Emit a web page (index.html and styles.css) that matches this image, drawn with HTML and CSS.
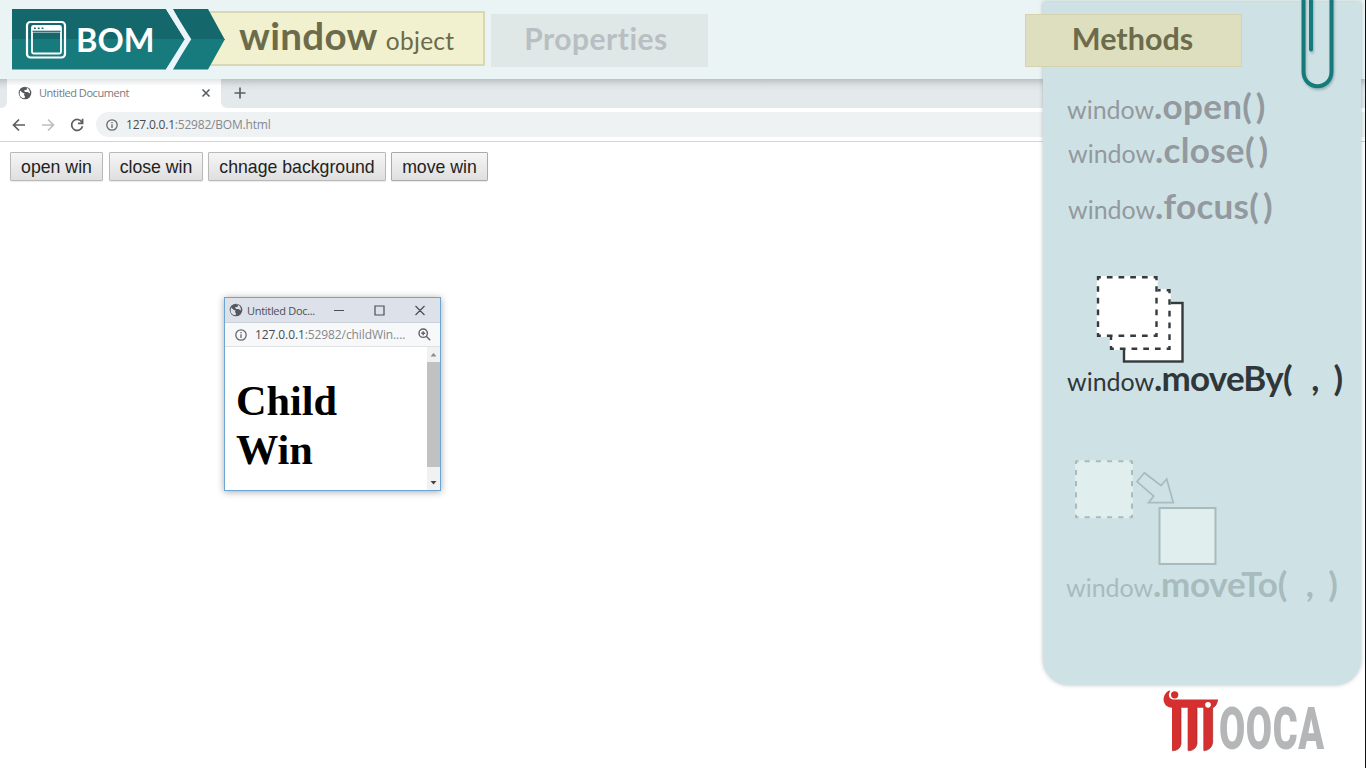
FILE: index.html
```html
<!DOCTYPE html>
<html lang="en">
<head>
<meta charset="utf-8">
<title>BOM - window object</title>
<link rel="stylesheet" href="styles.css">
</head>
<body>
<div class="stage">
  <header class="topbar">
    <div class="brand">
      <svg class="ribbon" viewBox="0 0 214 61">
        <path fill="#14676b" d="M0 0H154L173.300 31H0z"/><path fill="#177a7d" d="M0 30H173.300L154 60.500H0z"/>
        <path fill="#14676b" d="M161 0H196L213 31H178z"/><path fill="#177a7d" d="M178 30H213L196 60.500H161z"/>
        <path fill="none" stroke="#eaf4fb" stroke-width="5.500" d="M156.500 -1L176 30.300L156.500 61.500"/>
        <g fill="none" stroke="#fff"><rect x="15" y="13" width="38" height="35.500" rx="3.500" stroke-width="2.200"/><path fill="#fff" stroke="none" d="M20 17H49V23.500H20z"/><rect x="20" y="17" width="29" height="27.500" rx="1.500" stroke-width="1.800"/><path stroke="#14676b" stroke-width="1.600" stroke-dasharray="1.800 2" d="M22 19.300H33"/><path stroke="#14676b" stroke-width="1.200" d="M20.500 22.300H48.500"/></g>
      </svg>
      <span class="brand-name">BOM</span>
    </div>
    <div class="crumb"><b>window</b><span>object</span></div>
    <div class="tab-properties">Properties</div>
  </header>

  <div class="tabstrip">
    <div class="strip-edge"></div>
    <div class="tab">
      <svg class="globe" viewBox="0 0 14 14"><circle cx="7" cy="7" r="6.300" fill="#55585c"/><path fill="#fff" d="M2 4.500L5 7L6.500 7.500L6 9L7 10.500L6.500 12.300Q2 12 1.600 8zM6 1.900H9L8.500 4L6 4.300L7 6H9.500L12 7.500L11.700 5Q11 2.500 9 1.700z"/></svg>
      <span class="tab-title">Untitled Document</span>
      <svg class="tab-close" viewBox="0 0 10 10"><path d="M1.500 1.500L8.500 8.500M8.500 1.500L1.500 8.500"/></svg>
    </div>
    <div class="strip-rest"><svg class="plus" viewBox="0 0 12 12"><path d="M6 .5V11.500M.5 6H11.500"/></svg></div>
  </div>
  <div class="toolbar">
    <svg class="nav" viewBox="0 0 14 14"><path d="M13 7H2M7 1.500L1.500 7L7 12.500"/></svg>
    <svg class="nav nav-off" viewBox="0 0 14 14"><path d="M1 7H12M7 1.500L12.500 7L7 12.500"/></svg>
    <svg class="nav" viewBox="0 0 14 14"><path d="M12 4.300A5.500 5.500 0 1 0 12.500 8.300M8 5.300H12.600V.7"/></svg>
    <div class="address">
      <svg class="info" viewBox="0 0 12 12"><circle cx="6" cy="6" r="5.200"/><path d="M6 5.200V9M6 2.900V4.200"/></svg>
      <span class="url"><em>127.0.0.1</em>:52982/BOM.html</span>
    </div>
  </div>

  <main class="page">
    <button class="btn b1">open win</button>
    <button class="btn b2">close win</button>
    <button class="btn b3">chnage background</button>
    <button class="btn b4">move win</button>
  </main>

  <section class="child">
    <div class="child-title">
      <svg class="globe" viewBox="0 0 14 14"><circle cx="7" cy="7" r="6.300" fill="#55585c"/><path fill="#dde1ea" d="M2 4.500L5 7L6.500 7.500L6 9L7 10.500L6.500 12.300Q2 12 1.600 8zM6 1.900H9L8.500 4L6 4.300L7 6H9.500L12 7.500L11.700 5Q11 2.500 9 1.700z"/></svg>
      <span>Untitled Doc...</span>
      <svg class="controls" viewBox="0 0 94 12"><path d="M1 6.500H11M42 2H51V11H42zM82.500 2L91.500 11M91.500 2L82.500 11"/></svg>
    </div>
    <div class="child-url">
      <svg class="info" viewBox="0 0 12 12"><circle cx="6" cy="6" r="5.200"/><path d="M6 5.200V9M6 2.900V4.200"/></svg>
      <span class="url"><em>127.0.0.1</em>:52982/childWin....</span>
      <svg class="mag" viewBox="0 0 13 13"><circle cx="5.200" cy="5.200" r="4.200"/><path d="M8.300 8.300L12.200 12.200M3.200 5.200H7.200M5.200 3.200V7.200"/></svg>
    </div>
    <div class="child-body">
      <h1>Child<br>Win</h1>
      <div class="scroll">
        <svg viewBox="0 0 13 15"><path fill="#8c8c8c" d="M3.500 9.500H9.500L6.500 6z"/></svg>
        <div class="thumb"></div>
        <svg viewBox="0 0 13 15"><path fill="#444" d="M3.500 6H9.500L6.500 9.500z"/></svg>
      </div>
    </div>
  </section>

  <aside class="panel">
    <div class="tab-methods">Methods</div>
    <p class="method m-open"><span>window</span><b>.open<u>()</u></b></p>
    <p class="method m-close"><span>window</span><b>.close<u>()</u></b></p>
    <p class="method m-focus"><span>window</span><b>.focus<u>()</u></b></p>
    <svg class="pic-by" viewBox="1096 275 90 90">
      <g fill="#fff" stroke="#343a3d" stroke-width="2.400"><rect x="1124" y="303" width="58.500" height="58.500"/>
      <rect x="1111" y="290.300" width="58.500" height="58.500" stroke="#fff"/><rect x="1111" y="290.300" width="58.500" height="58.500" stroke-dasharray="5.700 6" stroke-dashoffset="2.850"/>
      <rect x="1098" y="277.300" width="58.500" height="58.500" stroke="#fff"/><rect x="1098" y="277.300" width="58.500" height="58.500" stroke-dasharray="5.700 6" stroke-dashoffset="2.850"/></g>
    </svg>
    <p class="method m-by"><span>window</span><b>.moveBy<u>(</u><i>,</i><u>)</u></b></p>
    <svg class="pic-to" viewBox="1074 459 146 108">
      <g fill="#e1eeee" stroke="#a9bbbd" stroke-width="2"><rect x="1076" y="461.300" width="56" height="56" stroke="#e1eeee"/><rect x="1076" y="461.300" width="56" height="56" stroke-dasharray="5.200 6" stroke-dashoffset="2.600"/>
      <rect x="1159.500" y="508" width="56" height="56"/>
      <path fill="none" stroke-width="1.700" d="M1144.300 472.800L1161 485.500L1166.700 478.900L1173.300 502.700H1148.500L1153.700 496L1137 481.700z"/></g>
    </svg>
    <p class="method m-to"><span>window</span><b>.moveTo<u>(</u><i>,</i><u>)</u></b></p>
    <svg class="clip" viewBox="0 0 40 92"><g fill="none" stroke="#167a7b" stroke-linecap="round"><path stroke-width="4" d="M9.500 -5V71.500C9.500 91 37.500 91 37.500 71.500V-5"/><path stroke-width="4" d="M17 -5V49.500"/></g></svg>
  </aside>

  <div class="logo">
    <svg class="logo-mark" viewBox="398 148 168 188">
      <path fill="#d3302f" d="M417 152C392 164 394 202 425 204V333Q449 332 452 312V204H472V333Q496 332 500 312V204H519V333Q544 330 547 308V204Q560 198 562 179H428C414 176 413 164 420 153z"/>
      <circle cx="433" cy="165" r="11" fill="#cf302f"/><circle cx="533" cy="195" r="8.500" fill="#fff"/>
      <path fill="none" stroke="#9d2529" stroke-width="2" d="M426 333Q449 332 452 312V205M474 333Q496 332 500 312V205M521 333Q544 330 547 308V204Q560 198 562 179"/>
    </svg>
    <span class="logo-text">OOCA</span>
  </div>
  <div class="edge"></div>
</div>
</body>
</html>
```
FILE: styles.css
```css
* { box-sizing: border-box; }
body { margin: 0; background: #fff; }
svg { display: block; flex: none; overflow: visible; }
.stage { position: relative; width: 1366px; height: 768px; overflow: hidden; background: #fff; font-family: "Open Sans", "Noto Sans", sans-serif; font-variant-ligatures: none; }

.topbar { display: flex; height: 79px; background: #eaf4f5; font-family: Lato, sans-serif; align-items: flex-start; padding-left: 12px; }
.brand { position: relative; z-index: 1; width: 214px; height: 61px; margin-top: 9px; display: grid; }
.brand > * { grid-area: 1 / 1; }
.ribbon { width: 214px; height: 61px; }
.brand-name { color: #fff; font-weight: 700; font-size: 32.500px; line-height: 61px; padding-left: 64px; }
.crumb { width: 276px; height: 55px; margin: 11px 0 0 -17px; border: 2px solid #d9d8b4; background: #f1f1d0; color: #6c6b4b; display: flex; align-items: baseline; padding-left: 28px; line-height: 45px; white-space: nowrap; }
.crumb b { font-size: 38.500px; letter-spacing: .3px; }
.crumb span { font-size: 24.500px; margin-left: 8px; letter-spacing: .3px; }
.tab-properties { width: 217px; height: 53px; margin: 14px 0 0 6px; background: #dfe7e7; color: #b8bfc2; font-weight: 700; font-size: 30px; line-height: 48px; text-align: center; padding-right: 7px; letter-spacing: .5px; }

.tabstrip { display: flex; height: 29px; background: #fff; }
.strip-edge, .strip-rest { background: linear-gradient(#bcc3c7, #dde2e5 7px, #e4e9ec 12px); }
.strip-edge { width: 7px; border-radius: 0 0 6px 0; }
.tab { width: 214px; display: flex; align-items: center; padding: 0 0 2px 11px; background: linear-gradient(#e2e4e5, #fff 7px); }
.globe { width: 14px; height: 14px; }
.tab-title { margin-left: 7px; width: 168px; font-size: 11px; color: #777b80; letter-spacing: -.45px; }
.tab-close { width: 10px; height: 10px; margin-left: -6px; fill: none; stroke: #56595d; stroke-width: 1.500; }
.strip-rest { flex: 1; border-radius: 0 0 0 6px; padding: 8px 0 0 13px; }
.plus { width: 12px; height: 12px; fill: none; stroke: #5c6064; stroke-width: 1.700; }
.toolbar { display: flex; align-items: center; height: 34px; padding-left: 12px; border-bottom: 1px solid #d3d4d4; background: #fff; }
.nav { width: 14px; height: 14px; margin-right: 15px; fill: none; stroke: #5b5e62; stroke-width: 1.700; }
.nav-off { stroke: #bcbec0; }
.address { flex: 1; height: 25px; border-radius: 13px 0 0 13px; background: #eff2f3; display: flex; align-items: center; padding-left: 10px; margin-left: -3px; }
.info { width: 12px; height: 12px; fill: none; stroke: #666a6e; stroke-width: 1.300; }
.url { margin-left: 8px; font-size: 12px; letter-spacing: -.2px; color: #85898d; white-space: nowrap; }
.url em { font-style: normal; color: #494c50; }

.page { display: flex; padding: 10px 0 0 10px; }
.btn { height: 29px; padding: 0; border: 1px solid #b9b9b9; border-radius: 1px; background: linear-gradient(#f5f5f5, #dfdfdf); color: #222; font: 17.700px/28px "Liberation Sans", Arial, sans-serif; box-shadow: 0 1px 1px rgba(0,0,0,.08); white-space: nowrap; }
.b1 { width: 93px; } .b2 { width: 94px; margin-left: 6px; } .b3 { width: 178px; margin-left: 5px; } .b4 { width: 97px; margin-left: 5px; border-color: #aaa; }

.child { position: absolute; left: 224px; top: 297px; width: 217px; height: 194px; border: 1px solid #6aa5d4; background: #fff; box-shadow: 0 1px 7px rgba(0,0,0,.35); display: flex; flex-direction: column; }
.child-title { height: 25px; background: #dde1ea; border-bottom: 1px solid #cdd1d8; display: flex; align-items: center; padding-left: 4px; font-size: 11px; letter-spacing: -.3px; color: #4c4f55; }
.child-title span { width: 84px; margin-left: 4px; white-space: nowrap; }
.controls { width: 94px; height: 12px; margin-left: 2px; fill: none; stroke: #4c4f55; stroke-width: 1.200; }
.child-url { height: 24px; background: #f6f8fa; border-bottom: 1px solid #dfe0e1; display: flex; align-items: center; padding-left: 10px; }
.child-url .url { width: 163px; letter-spacing: -.1px; }
.mag { width: 13px; height: 13px; fill: none; stroke: #606468; stroke-width: 1.400; }
.child-body { flex: 1; display: flex; justify-content: space-between; }
.child h1 { margin: 29px 0 0 11px; font: 700 42.300px/49px "Liberation Serif", "Times New Roman", serif; color: #000; }
.scroll { width: 13px; background: #f1f1f1; display: flex; flex-direction: column; }
.scroll svg { width: 13px; height: 15px; }
.thumb { flex: 1; margin-bottom: 8px; background: #c1c1c1; }

.panel { position: absolute; left: 1043px; top: 2px; width: 318px; height: 683px; border-radius: 0 0 26px 26px; background: #cee2e5; box-shadow: 0 0 4px rgba(80,100,105,.4); font-family: Lato, sans-serif; display: flex; flex-direction: column; align-items: flex-start; }
.tab-methods { width: 217px; height: 53px; margin: 12px 0 0 -18px; border: 1px solid #d5d3ae; background: #dedfbf; color: #6c6b4b; font-weight: 700; font-size: 30.500px; line-height: 46px; text-align: center; padding-right: 2px; }
.method { margin: 0 0 0 24px; height: 44px; line-height: 44px; color: #93999e; white-space: nowrap; display: flex; align-items: baseline; }
.method span { font-size: 25px; width: 87px; }
.method b { font-size: 35px; letter-spacing: .3px; }
.method u { text-decoration: none; letter-spacing: 4px; }
.method i { font-style: normal; display: inline-block; width: 37px; text-align: center; }
.m-open { margin-top: 16px; }
.m-close { margin-left: 25px; }
.m-focus { margin: 12px 0 0 25px; }
.pic-by { width: 90px; height: 90px; margin: 48px 0 0 53px; }
.m-by { color: #30373a; margin-top: -10px; }
.m-by b { letter-spacing: -.8px; }
.pic-to { width: 146px; height: 108px; margin: 60px 0 0 31px; }
.m-to { color: #a8bbbd; margin: -6px 0 0 23px; }
.m-to b { letter-spacing: -.3px; }
.clip { position: absolute; left: 251px; top: -2px; width: 40px; height: 92px; filter: drop-shadow(1px 2px 1px rgba(0,40,50,.25)); }

.logo { position: absolute; left: 1163px; top: 689px; display: flex; align-items: flex-start; }
.logo-mark { width: 56px; height: 63px; }
.logo-text { margin-top: 17px; font: 900 38px/46px Roboto, sans-serif; letter-spacing: .6px; color: #b5b6b7; transform: scaleY(1.550); }
.edge { position: absolute; right: 0; top: 0; width: 1px; height: 768px; background: #111; }
```
